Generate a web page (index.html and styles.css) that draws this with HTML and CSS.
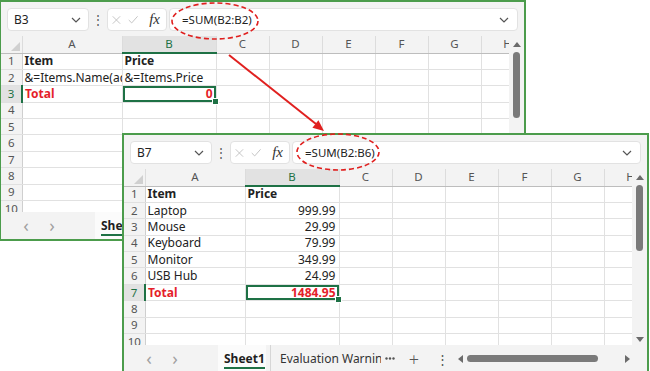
FILE: index.html
```html
<!DOCTYPE html>
<html lang="en">
<head>
    <meta charset="UTF-8">
    <title>Excel SUM formula before and after</title>
    <link rel="stylesheet" href="styles.css">
</head>
<body>
    <div class="desktop">

        <!-- template sheet -->
        <div class="window win-back">
            <div class="toolbar">
                <div class="namebox">
                    <span>B3</span>
                    <svg class="chev" width="10" height="6" viewBox="0 0 10 6"><polyline points="1,1 5,5 9,1"/></svg>
                </div>
                <span class="more">&#8942;</span>
                <div class="fxbox">
                    <svg width="12" height="12" viewBox="0 0 12 12"><path d="M1 1 L11 11 M11 1 L1 11"/></svg>
                    <svg width="14" height="12" viewBox="0 0 14 12"><path d="M1 6 L5 10 L13 1"/></svg>
                    <span class="fx">fx</span>
                </div>
                <div class="formula">
                    <span>=SUM(B2:B2)</span>
                    <svg class="chev" width="10" height="6" viewBox="0 0 10 6"><polyline points="1,1 5,5 9,1"/></svg>
                </div>
            </div>
            <div class="sheet">
                <div class="grid-wrap">
                    <table class="grid">
                        <colgroup>
                            <col class="c-row"><col class="c-a"><col class="c-b"><col class="c-n"><col class="c-n"><col class="c-n"><col class="c-n"><col class="c-n"><col class="c-n">
                        </colgroup>
                        <tr class="head">
                            <th class="corner"></th><th>A</th><th class="on">B</th><th>C</th><th>D</th><th>E</th><th>F</th><th>G</th><th>H</th>
                        </tr>
                        <tr><th>1</th><td class="b">Item</td><td class="b">Price</td><td></td><td></td><td></td><td></td><td></td><td></td></tr>
                        <tr><th>2</th><td>&amp;=Items.Name(add)</td><td>&amp;=Items.Price</td><td></td><td></td><td></td><td></td><td></td><td></td></tr>
                        <tr><th class="on">3</th><td class="b red">Total</td><td class="b red num sel">0</td><td></td><td></td><td></td><td></td><td></td><td></td></tr>
                        <tr><th>4</th><td></td><td></td><td></td><td></td><td></td><td></td><td></td><td></td></tr>
                        <tr><th>5</th><td></td><td></td><td></td><td></td><td></td><td></td><td></td><td></td></tr>
                        <tr><th>6</th><td></td><td></td><td></td><td></td><td></td><td></td><td></td><td></td></tr>
                        <tr><th>7</th><td></td><td></td><td></td><td></td><td></td><td></td><td></td><td></td></tr>
                        <tr><th>8</th><td></td><td></td><td></td><td></td><td></td><td></td><td></td><td></td></tr>
                        <tr><th>9</th><td></td><td></td><td></td><td></td><td></td><td></td><td></td><td></td></tr>
                        <tr><th>10</th><td></td><td></td><td></td><td></td><td></td><td></td><td></td><td></td></tr>
                    </table>
                </div>
                <div class="vscroll">
                    <span class="tri up"></span>
                    <span class="vthumb"></span>
                    <span class="tri down"></span>
                </div>
            </div>
            <div class="tabbar">
                <span class="nav">&#8249;</span>
                <span class="nav">&#8250;</span>
                <div class="tab active"><span>Sheet1</span></div>
                <div class="tab"><span>Evaluation Warning</span></div>
                <span class="tool dots"><svg width="10" height="3" viewBox="0 0 10 3"><circle cx="1.5" cy="1.5" r="1.2"/><circle cx="5" cy="1.5" r="1.2"/><circle cx="8.5" cy="1.5" r="1.2"/></svg></span>
                <span class="tool plus">+</span>
                <span class="tool kebab">&#8942;</span>
                <div class="hscroll">
                    <span class="tri left"></span>
                    <span class="hthumb"></span>
                    <span class="tri right"></span>
                </div>
            </div>
        </div>

        <!-- result sheet -->
        <div class="window win-front">
            <div class="toolbar">
                <div class="namebox">
                    <span>B7</span>
                    <svg class="chev" width="10" height="6" viewBox="0 0 10 6"><polyline points="1,1 5,5 9,1"/></svg>
                </div>
                <span class="more">&#8942;</span>
                <div class="fxbox">
                    <svg width="12" height="12" viewBox="0 0 12 12"><path d="M1 1 L11 11 M11 1 L1 11"/></svg>
                    <svg width="14" height="12" viewBox="0 0 14 12"><path d="M1 6 L5 10 L13 1"/></svg>
                    <span class="fx">fx</span>
                </div>
                <div class="formula">
                    <span>=SUM(B2:B6)</span>
                    <svg class="chev" width="10" height="6" viewBox="0 0 10 6"><polyline points="1,1 5,5 9,1"/></svg>
                </div>
            </div>
            <div class="sheet">
                <div class="grid-wrap">
                    <table class="grid">
                        <colgroup>
                            <col class="c-row"><col class="c-a"><col class="c-b"><col class="c-n"><col class="c-n"><col class="c-n"><col class="c-n"><col class="c-n"><col class="c-n">
                        </colgroup>
                        <tr class="head">
                            <th class="corner"></th><th>A</th><th class="on">B</th><th>C</th><th>D</th><th>E</th><th>F</th><th>G</th><th>H</th>
                        </tr>
                        <tr><th>1</th><td class="b">Item</td><td class="b">Price</td><td></td><td></td><td></td><td></td><td></td><td></td></tr>
                        <tr><th>2</th><td>Laptop</td><td class="num">999.99</td><td></td><td></td><td></td><td></td><td></td><td></td></tr>
                        <tr><th>3</th><td>Mouse</td><td class="num">29.99</td><td></td><td></td><td></td><td></td><td></td><td></td></tr>
                        <tr><th>4</th><td>Keyboard</td><td class="num">79.99</td><td></td><td></td><td></td><td></td><td></td><td></td></tr>
                        <tr><th>5</th><td>Monitor</td><td class="num">349.99</td><td></td><td></td><td></td><td></td><td></td><td></td></tr>
                        <tr><th>6</th><td>USB Hub</td><td class="num">24.99</td><td></td><td></td><td></td><td></td><td></td><td></td></tr>
                        <tr><th class="on">7</th><td class="b red">Total</td><td class="b red num sel">1484.95</td><td></td><td></td><td></td><td></td><td></td><td></td></tr>
                        <tr><th>8</th><td></td><td></td><td></td><td></td><td></td><td></td><td></td><td></td></tr>
                        <tr><th>9</th><td></td><td></td><td></td><td></td><td></td><td></td><td></td><td></td></tr>
                        <tr><th>10</th><td></td><td></td><td></td><td></td><td></td><td></td><td></td><td></td></tr>
                    </table>
                </div>
                <div class="vscroll">
                    <span class="tri up"></span>
                    <span class="vthumb"></span>
                    <span class="tri down"></span>
                </div>
            </div>
            <div class="tabbar">
                <span class="nav">&#8249;</span>
                <span class="nav">&#8250;</span>
                <div class="tab active"><span>Sheet1</span></div>
                <div class="tab"><span>Evaluation Warning</span></div>
                <span class="tool dots"><svg width="10" height="3" viewBox="0 0 10 3"><circle cx="1.5" cy="1.5" r="1.2"/><circle cx="5" cy="1.5" r="1.2"/><circle cx="8.5" cy="1.5" r="1.2"/></svg></span>
                <span class="tool plus">+</span>
                <span class="tool kebab">&#8942;</span>
                <div class="hscroll">
                    <span class="tri left"></span>
                    <span class="hthumb"></span>
                    <span class="tri right"></span>
                </div>
            </div>
        </div>

        <!-- red callouts -->
        <svg class="marks" width="650" height="371" viewBox="0 0 650 371">
            <ellipse cx="215" cy="21" rx="43" ry="18"/>
            <line x1="229" y1="55" x2="316" y2="124"/>
            <polygon class="head" points="324,131 312.4,127.8 318.4,120.2"/>
            <ellipse cx="338" cy="152" rx="41" ry="18"/>
        </svg>
    </div>
</body>
</html>
```

FILE: styles.css
```css
body {
    margin: 0;
    background-color: white;
    font-family: "Noto Sans", "Open Sans", sans-serif;
    font-size: 12px;
    color: #222;
}
.desktop {
    position: relative;
    width: 650px;
    height: 371px;
    overflow: hidden;
}
.window {
    position: absolute;
    width: 527px;
    height: 241px;
    box-sizing: border-box;
    border: 2px solid #4c9c4c;
    background-color: #f3f3f3;
    display: flex;
    flex-direction: column;
    overflow: hidden;
}
.win-back {
    left: -1px;
    top: 0;
}
.win-front {
    left: 122px;
    top: 133px;
}

/* formula row */
.toolbar {
    display: flex;
    align-items: center;
    height: 23px;
    margin: 6px 6px 5px 6px;
    flex-shrink: 0;
}
.namebox, .fxbox, .formula {
    height: 23px;
    box-sizing: border-box;
    background-color: white;
    border: 1px solid #e2e2e2;
    border-radius: 4px;
    display: flex;
    align-items: center;
}
.namebox {
    width: 82px;
    padding: 0 7px 0 6px;
    justify-content: space-between;
}
.more {
    width: 18px;
    text-align: center;
    color: #555;
    font-size: 12px;
}
.fxbox {
    width: 60px;
    padding: 0 6px 0 4px;
    gap: 7px;
}
.fxbox svg path {
    fill: none;
    stroke: #bdbdbd;
    stroke-width: 1.2;
}
.fx {
    font-family: "Liberation Serif", serif;
    font-style: italic;
    font-size: 15px;
    color: #333;
    margin-left: 4px;
}
.formula {
    flex: 1;
    margin-left: 2px;
    padding: 0 8px 0 12px;
    justify-content: space-between;
    font-size: 11.5px;
}
.chev polyline {
    fill: none;
    stroke: #555;
    stroke-width: 1.2;
}

/* cells */
.sheet {
    display: flex;
    height: 176px;
    flex-shrink: 0;
}
.grid-wrap {
    width: 508px;
    overflow: hidden;
    background-color: white;
}
.grid {
    border-collapse: collapse;
    table-layout: fixed;
    width: 533px;
}
.c-row { width: 21px; }
.c-a { width: 100px; }
.c-b { width: 94px; }
.c-n { width: 53px; }
.grid tr {
    height: 16.4px;
}
.grid tr.head {
    height: 17px;
}
.grid th {
    background-color: #f3f3f3;
    color: #555;
    font-weight: normal;
    font-size: 11.5px;
    line-height: 14px;
    padding: 0;
    text-align: center;
    border-bottom: 1px solid #e0e0e0;
    border-right: 1px solid #cfcfcf;
}
.grid tr.head th {
    border-right: 1px solid #dcdcdc;
    border-bottom: 1px solid #bdbdbd;
}
.grid th.on {
    background-color: #e2e2e2;
    color: #1e7145;
}
.grid tr.head th.on {
    border-bottom: 2px solid #1e7145;
}
.grid tr:not(.head) th.on {
    border-right: 2px solid #1e7145;
}
.corner {
    position: relative;
}
.corner::after {
    content: "";
    position: absolute;
    right: 2px;
    bottom: 2px;
    border-left: 9px solid transparent;
    border-bottom: 9px solid #d0d0d0;
}
.grid td {
    border: 1px solid #e1e1e1;
    padding: 0 3px 0 2px;
    white-space: nowrap;
    overflow: hidden;
    font-size: 12px;
    line-height: 14px;
}
.b { font-weight: bold; }
.red { color: #e51e2a; }
.num { text-align: right; }
.grid td.sel {
    position: relative;
    box-shadow: inset 0 0 0 2px #1e7145;
    overflow: visible;
}
.sel::after {
    content: "";
    position: absolute;
    right: -3px;
    bottom: -3px;
    width: 5px;
    height: 5px;
    background-color: #1e7145;
    border: 1px solid white;
}

/* scrollbars */
.vscroll {
    width: 15px;
    display: flex;
    flex-direction: column;
    align-items: center;
    padding: 6px 0 3px;
    box-sizing: border-box;
}
.vthumb {
    width: 7px;
    height: 66px;
    margin-top: 5px;
    border-radius: 4px;
    background-color: #7a7a7a;
}
.tri {
    width: 0;
    height: 0;
}
.tri.up {
    border-left: 4px solid transparent;
    border-right: 4px solid transparent;
    border-bottom: 5px solid #6b6b6b;
}
.tri.down {
    margin-top: auto;
    border-left: 4px solid transparent;
    border-right: 4px solid transparent;
    border-top: 5px solid #6b6b6b;
}
.tri.left {
    border-top: 4px solid transparent;
    border-bottom: 4px solid transparent;
    border-right: 5px solid #6b6b6b;
}
.tri.right {
    margin-left: auto;
    border-top: 4px solid transparent;
    border-bottom: 4px solid transparent;
    border-left: 5px solid #6b6b6b;
}

/* sheet tabs */
.tabbar {
    flex: 1;
    display: flex;
    align-items: stretch;
    padding-left: 12px;
}
.nav {
    width: 26px;
    display: flex;
    align-items: center;
    justify-content: center;
    color: #a0a0a0;
    font-size: 18px;
    padding-bottom: 2px;
}
.nav + .nav {
    margin-right: 30px;
}
.tab {
    display: flex;
    align-items: center;
    font-size: 12px;
    color: #333;
    white-space: nowrap;
    overflow: hidden;
    box-sizing: border-box;
}
.tab.active {
    width: 48px;
    background-color: #fbfbfb;
    font-weight: bold;
    color: #1f1f1f;
    padding-left: 6px;
}
.tab.active span {
    border-bottom: 2px solid #1e7145;
    padding-top: 2px;
}
.tab:not(.active) {
    width: 113px;
    margin-left: 4px;
    padding-left: 9px;
    border-left: 1px solid #d6d6d6;
}
.tab:not(.active) span {
    display: block;
    width: 101px;
    overflow: hidden;
}
.tool {
    display: flex;
    align-items: center;
    justify-content: center;
    color: #555;
}
.tool.dots {
    width: 14px;
}
.tool.dots svg {
    fill: #555;
}
.tool.plus {
    width: 24px;
    margin-left: 5px;
    font-size: 18px;
    font-weight: 300;
}
.tool.kebab {
    width: 26px;
    margin-left: 3px;
    font-size: 13px;
}
.hscroll {
    flex: 1;
    display: flex;
    align-items: center;
    margin: 0 17px 0 3px;
}
.hthumb {
    width: 131px;
    height: 7px;
    margin-left: 4px;
    border-radius: 4px;
    background-color: #7a7a7a;
}

/* red callouts */
.marks {
    position: absolute;
    left: 0;
    top: 0;
    pointer-events: none;
}
.marks ellipse {
    fill: none;
    stroke: #e0201f;
    stroke-width: 1.6;
    stroke-dasharray: 5 3;
}
.marks line {
    stroke: #e0201f;
    stroke-width: 2;
}
.marks .head {
    fill: #e0201f;
}
```
